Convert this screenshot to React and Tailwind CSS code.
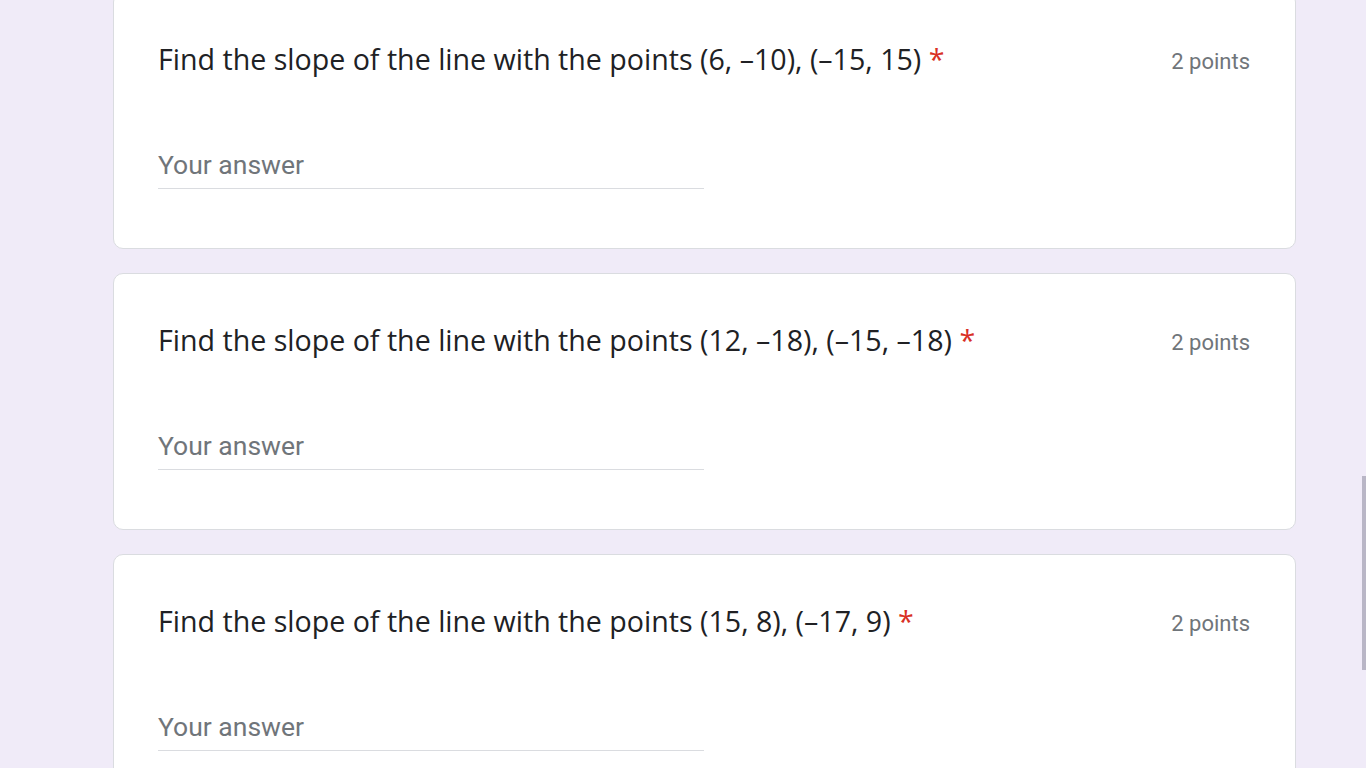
import React from "react";

const questions = [
  { id: 1, text: "Find the slope of the line with the points (6, –10), (–15, 15)" },
  { id: 2, text: "Find the slope of the line with the points (12, –18), (–15, –18)" },
  { id: 3, text: "Find the slope of the line with the points (15, 8), (–17, 9)" },
];

const QuestionCard = ({ text }) => (
  <div className="h-[257px] shrink-0 bg-white border border-[#dadce0] rounded-[10px] pl-[44px] pr-[45px] pt-[48px]">
    {/* Title row */}
    <div className="flex items-start justify-between">
      <div
        className="text-[28.6px] leading-[36px] text-[#202124]"
        style={{ fontFamily: '"Open Sans", sans-serif' }}
      >
        {text} <span className="text-[#d93025]">*</span>
      </div>
      <div
        className="text-[22px] leading-[40px] text-[#70757a] pt-px"
        style={{ fontFamily: "Roboto, sans-serif" }}
      >
        2 points
      </div>
    </div>

    {/* Answer field */}
    <div className="mt-[66px] w-[546px] border-b-[1.5px] border-[#dadce0] pb-[6px]">
      <div
        className="text-[26.5px] leading-[34px] text-[#70757a]"
        style={{ fontFamily: "Roboto, sans-serif" }}
      >
        Your answer
      </div>
    </div>
  </div>
);

const App = () => {
  return (
    <div className="relative h-[768px] overflow-hidden bg-[#f0ebf8]">
      <div className="ml-[113px] -mt-2 flex w-[1183px] flex-col gap-6">
        {questions.map((q) => (
          <QuestionCard key={q.id} text={q.text} />
        ))}
      </div>

      {/* Scrollbar thumb */}
      <div className="absolute right-0 top-[476px] h-[194px] w-[4px] bg-[#b9b6c6]" />
    </div>
  );
};

export default App;
